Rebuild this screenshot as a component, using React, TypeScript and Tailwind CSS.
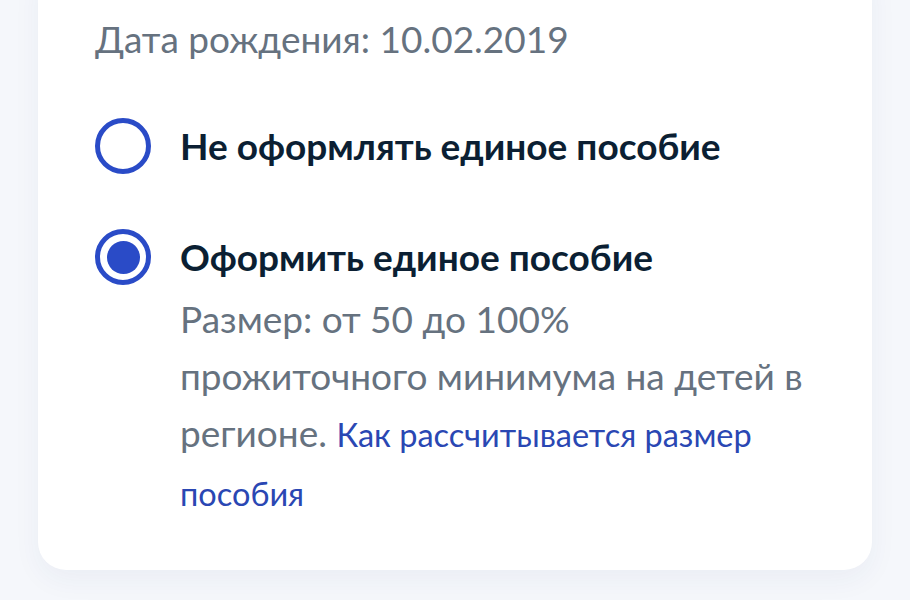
import React from "react";

type Option = {
  id: string;
  title: string;
  checked: boolean;
};

const options: Option[] = [
  { id: "no", title: "Не оформлять единое пособие", checked: false },
  { id: "yes", title: "Оформить единое пособие", checked: true },
];

function Radio({ checked }: { checked: boolean }) {
  return (
    <span className="flex h-[56px] w-[56px] shrink-0 items-center justify-center rounded-full border-[5px] border-[#2a4bc7] bg-white">
      {checked && <span className="h-[33px] w-[33px] rounded-full bg-[#2a4bc7]" />}
    </span>
  );
}

export default function App() {
  return (
    <div
      className="h-[600px] w-full overflow-hidden bg-[#f5f7fb] px-[38px]"
      style={{ fontFamily: "Lato, 'Noto Sans', sans-serif" }}
    >
      <div className="-mt-[40px] rounded-[28px] bg-white pl-[57px] pr-[40px] pt-[57px] pb-[48px] shadow-[0_10px_28px_rgba(40,60,120,0.05)]">
        <p className="text-[37px] leading-[44px] text-[#66727f]">Дата рождения: 10.02.2019</p>

        <div className="mt-[57px] flex flex-col gap-[55px]">
          {options.map((o) => (
            <label key={o.id} className="flex cursor-pointer items-start gap-[29px]">
              <Radio checked={o.checked} />
              <div>
                <div className="flex h-[56px] items-center text-[37px] font-bold leading-[44px] text-[#0b1f33]">
                  {o.title}
                </div>
                {o.checked && (
                  <p className="mt-[5px] text-[37px] leading-[57px] text-[#66727f]">
                    Размер: от 50 до 100%
                    <br />
                    прожиточного минимума на детей в
                    <br />
                    регионе.{" "}
                    <a href="#" className="text-[32.5px] text-[#2a47b3]">
                      Как рассчитывается размер
                      <br />
                      пособия
                    </a>
                  </p>
                )}
              </div>
            </label>
          ))}
        </div>
      </div>
    </div>
  );
}
